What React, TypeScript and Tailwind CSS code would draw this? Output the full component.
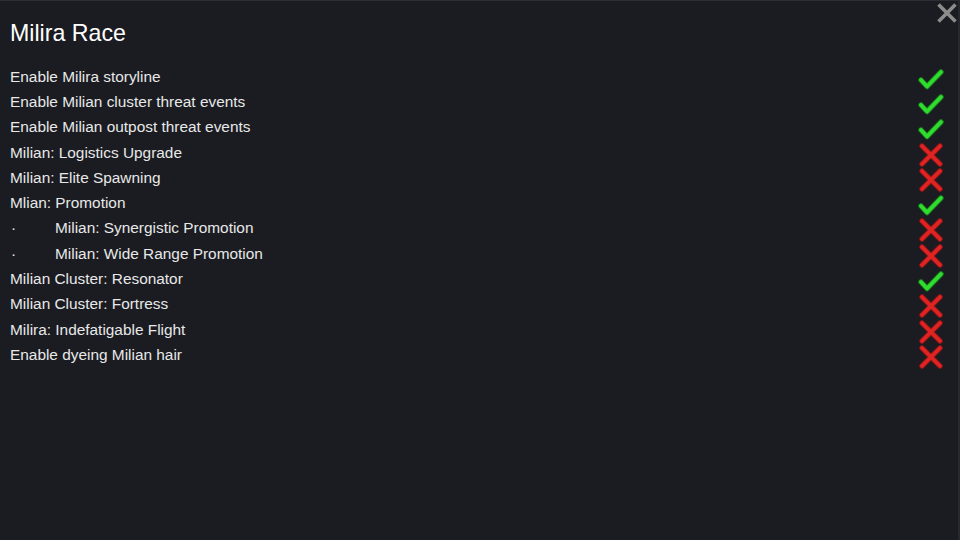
import React from "react";

type Row = { label: string; on: boolean; sub?: boolean };

const rows: Row[] = [
  { label: "Enable Milira storyline", on: true },
  { label: "Enable Milian cluster threat events", on: true },
  { label: "Enable Milian outpost threat events", on: true },
  { label: "Milian: Logistics Upgrade", on: false },
  { label: "Milian: Elite Spawning", on: false },
  { label: "Mlian: Promotion", on: true },
  { label: "Milian: Synergistic Promotion", on: false, sub: true },
  { label: "Milian: Wide Range Promotion", on: false, sub: true },
  { label: "Milian Cluster: Resonator", on: true },
  { label: "Milian Cluster: Fortress", on: false },
  { label: "Milira: Indefatigable Flight", on: false },
  { label: "Enable dyeing Milian hair", on: false },
];

function Check() {
  return (
    <svg width="26" height="24" viewBox="0 0 26 24">
      <polyline points="3,13 9,19.5 23,5" fill="none" stroke="#1a7a1a" strokeWidth="5.5" strokeLinecap="round" strokeLinejoin="round" />
      <polyline points="3,13 9,19.5 23,5" fill="none" stroke="#2fdc2f" strokeWidth="3.8" strokeLinecap="round" strokeLinejoin="round" />
    </svg>
  );
}

function Cross() {
  return (
    <svg width="26" height="24" viewBox="0 0 26 24">
      <path d="M4 3 L22 21 M22 3 L4 21" fill="none" stroke="#8a1515" strokeWidth="5.5" strokeLinecap="round" />
      <path d="M4 3 L22 21 M22 3 L4 21" fill="none" stroke="#e02424" strokeWidth="3.8" strokeLinecap="round" />
    </svg>
  );
}

export default function App() {
  return (
    <div
      className="w-[960px] h-[540px] bg-[#1a1c21] border-t border-t-[#2b2e33] border-r-2 border-r-[#25282d] relative overflow-hidden text-[#e8e8e8]"
      style={{ fontFamily: '"Liberation Sans", Arial, sans-serif' }}
    >
      <button className="absolute right-0 top-[1px] w-[22px] h-[22px] flex items-center justify-center">
        <svg width="22" height="22" viewBox="0 0 22 22">
          <path d="M2.5 2.5 L19.5 19.5 M19.5 2.5 L2.5 19.5" stroke="#8c8c8c" strokeWidth="3.6" strokeLinecap="butt" />
        </svg>
      </button>
      <div className="pl-[10px] pr-[14px] pt-[18px]">
        <div className="text-[23.2px] leading-[28px] text-white">Milira Race</div>
        <div className="mt-[17px] flex flex-col">
          {rows.map((r, i) => (
            <div key={i} className="h-[25.3px] flex items-center justify-between">
              <div className="flex items-center text-[15.4px] leading-[18px]">
                {r.sub ? (
                  <>
                    <span className="w-[45px] pl-[1px]">·</span>
                    <span>{r.label}</span>
                  </>
                ) : (
                  <span>{r.label}</span>
                )}
              </div>
              <div className="translate-y-[2px]">{r.on ? <Check /> : <Cross />}</div>
            </div>
          ))}
        </div>
      </div>
    </div>
  );
}
